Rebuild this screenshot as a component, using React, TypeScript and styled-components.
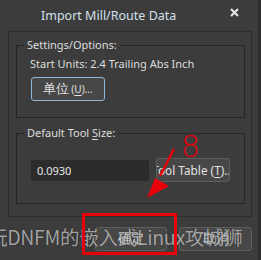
import React from "react";
import styled, { createGlobalStyle } from "styled-components";

const Global = createGlobalStyle`
  html, body { margin: 0; padding: 0; background: #2f2f2f; }
  body { font-family: "Noto Sans", "Open Sans", sans-serif; }
`;

const Window = styled.div`
  position: relative;
  width: 258px;
  height: 260px;
  background: #3c3c3c;
  color: #dcdcdc;
  font-size: 10.5px;
  display: flex;
  flex-direction: column;
  overflow: hidden;
`;

const TitleBar = styled.div`
  height: 31px;
  display: flex;
  align-items: center;
  padding-left: 41px;
`;

const Title = styled.div`
  font-size: 12.5px;
  color: #d3e0ea;
  padding-bottom: 1px;
  flex: 1;
`;

const Close = styled.div`
  margin-right: 19px;
  margin-bottom: 6px;
  display: flex;
`;

const Body = styled.div`
  padding: 0 6px 0 8px;
`;

const Panel = styled.div`
  height: 186px;
  box-sizing: border-box;
  border: 1px solid #2c2c2c;
  padding: 13px 6px 0 7px;
  display: flex;
  flex-direction: column;
  gap: 15px;
`;

const Group = styled.div<{ $h: number }>`
  height: ${(p) => p.$h}px;
  box-sizing: border-box;
  border: 1px solid #262626;
  padding: 0 0 0 14px;
  display: flex;
  flex-direction: column;
  align-items: flex-start;
`;

const Caption = styled.div`
  margin: -8px 0 0 -7px;
  padding: 0 3px;
  background: #3c3c3c;
  font-size: 11px;
  line-height: 14px;
`;

const Line = styled.div`
  font-size: 11px;
  line-height: 16px;
  margin: 4px 0 0 -1px;
`;

const Btn = styled.div<{ $w: number; $focus?: boolean; $fs?: number }>`
  width: ${(p) => p.$w}px;
  height: 24px;
  flex: none;
  box-sizing: border-box;
  border: 1px solid ${(p) => (p.$focus ? "#8fb6d9" : "#5e5e5e")};
  border-radius: 3px;
  background: #474747;
  display: flex;
  align-items: center;
  justify-content: center;
  white-space: nowrap;
  overflow: hidden;
  font-size: ${(p) => p.$fs ?? 11}px;
  color: #e2e2e2;
`;

const U = styled.span`
  text-decoration: underline;
  text-underline-offset: 2px;
`;

const Small = styled.span`
  font-size: 10px;
  margin-left: 2px;
`;

const Row = styled.div<{ $mt: number }>`
  display: flex;
  align-items: center;
  gap: 7px;
  margin-top: ${(p) => p.$mt}px;
`;

const Input = styled.div`
  width: 118px;
  height: 21px;
  box-sizing: border-box;
  border-radius: 3px;
  background: #2c2c2c;
  padding-left: 6px;
  display: flex;
  align-items: center;
  font-size: 11px;
  color: #e6e6e6;
`;

const Footer = styled.div`
  display: flex;
  justify-content: flex-end;
  gap: 12px;
  padding: 10px 6px 0 0;
`;

const Watermark = styled.div`
  position: absolute;
  left: -12px;
  top: 225px;
  font-family: "Noto Sans CJK SC", "Noto Sans", sans-serif;
  font-size: 19.5px;
  line-height: 24px;
  letter-spacing: -0.3px;
  white-space: nowrap;
  color: rgba(215, 215, 215, 0.72);
  text-shadow: 0 0 1px rgba(0, 0, 0, 0.6);
  pointer-events: none;
`;

const RedBox = styled.div`
  position: absolute;
  left: 82px;
  top: 213px;
  width: 95px;
  height: 42px;
  box-sizing: border-box;
  border: 3px solid #e8000b;
`;

const Annot = styled.svg`
  position: absolute;
  left: 0;
  top: 0;
  pointer-events: none;
`;

const Eight = styled.text`
  font-family: "DejaVu Sans", sans-serif;
  font-size: 30px;
  font-weight: 300;
`;

export default function App() {
  return (
    <>
      <Global />
      <Window>
        <TitleBar>
          <Title>Import Mill/Route Data</Title>
          <Close>
            <svg width="9" height="9" viewBox="0 0 9 9">
              <path d="M1 1 L8 8 M8 1 L1 8" stroke="#e4e4e4" strokeWidth="2.2" />
            </svg>
          </Close>
        </TitleBar>
        <Body>
          <Panel>
            <Group $h={73}>
              <Caption>Settings/Options:</Caption>
              <Line>Start Units: 2.4 Trailing Abs Inch</Line>
              <Row $mt={5}>
                <Btn $w={74} $focus $fs={12.5}>
                  单位
                  <Small>
                    (<U>U</U>)...
                  </Small>
                </Btn>
              </Row>
            </Group>
            <Group $h={71}>
              <Caption>
                Default Tool <U>S</U>ize:
              </Caption>
              <Row $mt={18}>
                <Input>0.0930</Input>
                <Btn $w={74} $fs={11.8}>
                  Tool Table (<U>T</U>)...
                </Btn>
              </Row>
            </Group>
          </Panel>
        </Body>
        <Footer>
          <Btn $w={72} $fs={12.5}>确定</Btn>
          <Btn $w={73} $fs={12.5}>取消</Btn>
        </Footer>
        <Watermark>玩DNFM的嵌入式Linux攻城狮</Watermark>
        <RedBox />
        <Annot width="261" height="260" viewBox="0 0 261 260">
          <Eight x="181" y="157" fill="#e8000b">
            8
          </Eight>
          <path d="M174 149 L160 176" stroke="#e8000b" strokeWidth="2.5" />
          <path d="M155 178 L169 186 L147 198 Z" fill="#e8000b" />
        </Annot>
      </Window>
    </>
  );
}
